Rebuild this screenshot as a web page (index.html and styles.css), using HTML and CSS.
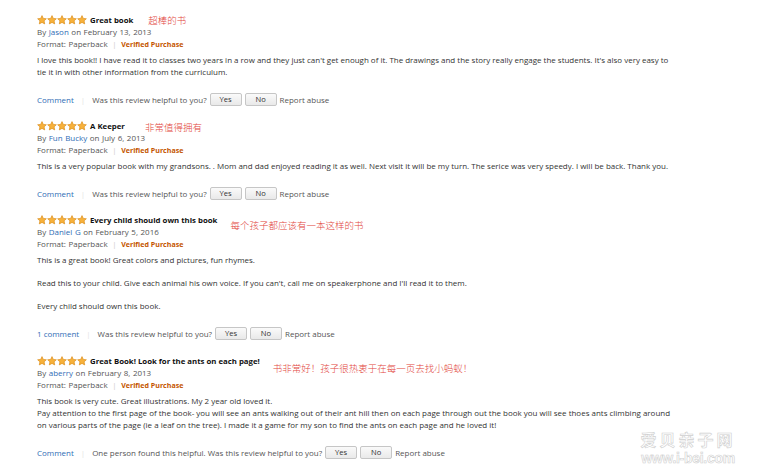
FILE: index.html
```html
<!DOCTYPE html>
<html>
<head>
<meta charset="utf-8">
<link rel="stylesheet" href="styles.css">
</head>
<body>
<svg width="0" height="0" class="defs">
  <defs>
    <symbol id="star" viewBox="0 0 20 20">
      <path d="M10 1.2l2.6 5.6 6.1.7-4.5 4.2 1.2 6.1L10 14.8l-5.4 3 1.2-6.1L1.3 7.5l6.1-.7z" fill="#f7b13b" stroke="#d98a14" stroke-width="1.3" stroke-linejoin="round"/>
    </symbol>
  </defs>
</svg>
<div class="reviews">
  <div class="review">
    <div class="head">
      <span class="stars"><svg><use href="#star"/></svg><svg><use href="#star"/></svg><svg><use href="#star"/></svg><svg><use href="#star"/></svg><svg><use href="#star"/></svg></span>
      <span class="title">Great book</span>
      <span class="note n1">超棒的书</span>
    </div>
    <div class="meta">By <a>Jason</a> on February 13, 2013</div>
    <div class="meta">Format: Paperback <span class="bar">|</span> <span class="verified">Verified Purchase</span></div>
    <div class="body">
      <p>I love this book!! I have read it to classes two years in a row and they just can't get enough of it. The drawings and the story really engage the students. It's also very easy to tie it in with other information from the curriculum.</p>
    </div>
    <div class="actions">
      <a class="cm">Comment</a><span class="bar">|</span>
      <span>Was this review helpful to you?</span>
      <button>Yes</button><button>No</button>
      <span>Report abuse</span>
    </div>
  </div>

  <div class="review">
    <div class="head">
      <span class="stars"><svg><use href="#star"/></svg><svg><use href="#star"/></svg><svg><use href="#star"/></svg><svg><use href="#star"/></svg><svg><use href="#star"/></svg></span>
      <span class="title">A Keeper</span>
      <span class="note n2">非常值得拥有</span>
    </div>
    <div class="meta">By <a>Fun Bucky</a> on July 6, 2013</div>
    <div class="meta">Format: Paperback <span class="bar">|</span> <span class="verified">Verified Purchase</span></div>
    <div class="body">
      <p>This is a very popular book with my grandsons. . Mom and dad enjoyed reading it as well. Next visit it will be my turn. The serice was very speedy. I will be back. Thank you.</p>
    </div>
    <div class="actions">
      <a class="cm">Comment</a><span class="bar">|</span>
      <span>Was this review helpful to you?</span>
      <button>Yes</button><button>No</button>
      <span>Report abuse</span>
    </div>
  </div>

  <div class="review">
    <div class="head">
      <span class="stars"><svg><use href="#star"/></svg><svg><use href="#star"/></svg><svg><use href="#star"/></svg><svg><use href="#star"/></svg><svg><use href="#star"/></svg></span>
      <span class="title">Every child should own this book</span>
      <span class="note n3">每个孩子都应该有一本这样的书</span>
    </div>
    <div class="meta">By <a>Daniel G</a> on February 5, 2016</div>
    <div class="meta">Format: Paperback <span class="bar">|</span> <span class="verified">Verified Purchase</span></div>
    <div class="body">
      <p>This is a great book! Great colors and pictures, fun rhymes.</p>
      <p class="gap">Read this to your child. Give each animal his own voice. If you can't, call me on speakerphone and I'll read it to them.</p>
      <p class="gap">Every child should own this book.</p>
    </div>
    <div class="actions">
      <a class="cm">1 comment</a><span class="bar">|</span>
      <span>Was this review helpful to you?</span>
      <button>Yes</button><button>No</button>
      <span>Report abuse</span>
    </div>
  </div>

  <div class="review r4">
    <div class="head">
      <span class="stars"><svg><use href="#star"/></svg><svg><use href="#star"/></svg><svg><use href="#star"/></svg><svg><use href="#star"/></svg><svg><use href="#star"/></svg></span>
      <span class="title">Great Book! Look for the ants on each page!</span>
      <span class="note n4">书非常好！孩子很热衷于在每一页去找小蚂蚁！</span>
    </div>
    <div class="meta">By <a>aberry</a> on February 8, 2013</div>
    <div class="meta">Format: Paperback <span class="bar">|</span> <span class="verified">Verified Purchase</span></div>
    <div class="body">
      <p>This book is very cute. Great illustrations. My 2 year old loved it.</p>
      <p>Pay attention to the first page of the book- you will see an ants walking out of their ant hill then on each page through out the book you will see thoes ants climbing around on various parts of the page (ie a leaf on the tree). I made it a game for my son to find the ants on each page and he loved it!</p>
    </div>
    <div class="actions">
      <a class="cm">Comment</a><span class="bar">|</span>
      <span>One person found this helpful. Was this review helpful to you?</span>
      <button>Yes</button><button>No</button>
      <span>Report abuse</span>
    </div>
  </div>
</div>
<div class="watermark">
  <div class="wm-cn">爱贝亲子网</div>
  <div class="wm-en">www.i-bei.com</div>
</div>
</body>
</html>
```

FILE: styles.css
```css
html, body {
  margin: 0;
  padding: 0;
  background: #fff;
}
body {
  font-family: "Open Sans", "Noto Sans", sans-serif;
  font-size: 7.98px;
  color: #444;
  position: relative;
  width: 761px;
  height: 474px;
  overflow: hidden;
}
.defs {
  position: absolute;
}
.reviews {
  padding: 13px 0 0 37px;
  display: flex;
  flex-direction: column;
  gap: 13px;
}
.review {
  display: flex;
  flex-direction: column;
}
.review.r4 {
  margin-top: 1px;
}
.head {
  display: flex;
  align-items: center;
  height: 13px;
}
.stars {
  display: flex;
  width: 50px;
}
.stars svg {
  width: 10px;
  height: 10px;
}
.title {
  font-weight: 700;
  color: #111;
  margin-left: 3px;
  font-size: 7.8px;
}
.note {
  color: #e2453c;
  font-family: "Noto Sans CJK SC", sans-serif;
  font-weight: 300;
  font-size: 9.5px;
  position: relative;
}
.n1 { margin-left: 15px; }
.n2 { margin-left: 20px; top: 1px; }
.n3 { margin-left: 13px; top: 5px; }
.n4 { margin-left: 13px; top: 7px; }
.meta {
  height: 12px;
  line-height: 12px;
  color: #555;
  word-spacing: 0.5px;
}
.meta a, .cm {
  color: #2f6db5;
}
.verified {
  color: #c45500;
  font-weight: 700;
  font-size: 7.1px;
  word-spacing: 0;
}
.bar {
  color: #ccc;
  margin: 0 2px;
}
.body {
  margin-top: 4px;
  width: 638px;
  color: #333;
}
.body p {
  margin: 0;
  line-height: 12px;
}
.body p.gap {
  margin-top: 11px;
}
.actions {
  margin-top: 14px;
  display: flex;
  align-items: center;
  height: 14px;
  color: #555;
}
.actions .bar {
  margin: 0 7px 0 7px;
  color: #e3e3e3;
}
.actions button {
  font-family: inherit;
  font-size: 7.6px;
  color: #333;
  background: linear-gradient(#fafafa, #e9e9e9);
  border: 1px solid #c6c6c6;
  border-radius: 2px;
  height: 13px;
  padding: 0;
  width: 32px;
  margin-left: 3px;
  line-height: 11px;
}
.actions button + span {
  margin-left: 3px;
}
.watermark {
  position: absolute;
  left: 636px;
  top: 430px;
  width: 104px;
  text-align: center;
  color: #fff;
  -webkit-text-stroke: 0.6px #cfcfcf;
  font-weight: 700;
  white-space: nowrap;
}
.wm-cn {
  font-family: "Noto Sans CJK SC", sans-serif;
  font-size: 16px;
  letter-spacing: 3px;
  line-height: 19px;
}
.wm-en {
  font-family: "Liberation Sans", sans-serif;
  font-size: 14px;
  letter-spacing: -0.3px;
  line-height: 14px;
  margin-top: 2px;
}
```
